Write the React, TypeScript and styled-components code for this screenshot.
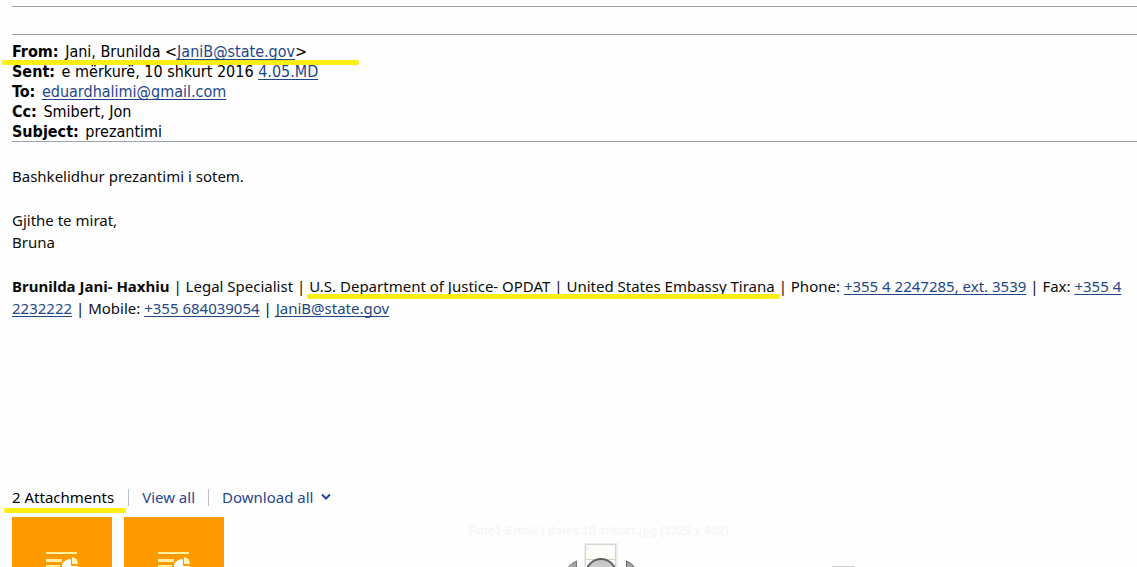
import React from "react";
import styled, { createGlobalStyle } from "styled-components";

const GlobalStyle = createGlobalStyle`
  * { box-sizing: border-box; }
  body {
    margin: 0;
    background: #fefefe;
    color: #0c0c0c;
    font-family: "Noto Sans", "Open Sans", sans-serif;
    font-size: 15px;
    line-height: 22px;
  }
`;

const Page = styled.main`
  position: relative;
  height: 100vh;
  overflow: hidden;
  padding: 6px 0 0 12px;
`;

const Rule = styled.hr<{ $gap?: number }>`
  height: 1px;
  margin: 0 0 ${(p) => p.$gap ?? 0}px;
  border: 0;
  background: #9aa3ad;
`;

const Headers = styled.section`
  height: 106px;
  padding-top: 7px;
  color: #000;
  font-family: "DejaVu Sans Condensed", Tahoma, sans-serif;
  font-size: 16px;
  line-height: 20px;
`;

const Field = styled.div`
  white-space: nowrap;
`;

const Label = styled.b`
  margin-right: 2px;
`;

const Link = styled.a`
  color: #1f4788;
  text-decoration: underline;
  text-decoration-thickness: 1px;
  text-underline-offset: 2px;
  text-decoration-skip-ink: none;
`;

const Marked = styled.span<{ $left: number; $right: number; $bottom: number }>`
  position: relative;
  display: inline-block;
  &::after {
    content: "";
    position: absolute;
    left: -${(p) => p.$left}px;
    right: -${(p) => p.$right}px;
    bottom: ${(p) => p.$bottom}px;
    height: 5px;
    border-radius: 2px;
    background: #faee14;
  }
`;

const Message = styled.section`
  padding-top: 23px;
`;

const Paragraph = styled.p`
  margin: 0 0 22px;
`;

const Attachments = styled.section`
  margin-top: 167px;
`;

const Toolbar = styled.div`
  display: flex;
  align-items: center;
  height: 22px;
`;

const Action = styled.button`
  display: flex;
  align-items: center;
  gap: 8px;
  padding: 0 13px;
  border: 0;
  background: none;
  color: #274690;
  font: inherit;
`;

const Separator = styled.span`
  width: 1px;
  height: 17px;
  background: #b9c0d0;
`;

const Count = styled.span`
  padding-right: 14px;
  color: #000;
`;

const Tiles = styled.div`
  display: flex;
  gap: 12px;
  margin-top: 9px;
`;

const Tile = styled.button`
  flex: none;
  display: flex;
  justify-content: center;
  align-items: flex-start;
  width: 100px;
  height: 100px;
  padding: 34px 0 0;
  border: 0;
  background: #ff9900;
`;

const Viewer = styled.aside`
  position: absolute;
  bottom: 0;
  left: 469px;
  width: 388px;
  height: 44px;
`;

const Caption = styled.div`
  color: #f6f6f6;
  font: bold 12px/16px "Liberation Sans", Arial, sans-serif;
  white-space: nowrap;
`;

const Controls = styled.svg`
  position: absolute;
  left: 0;
  bottom: 0;
`;

const SlidesIcon = () => (
  <svg width="32" height="32" viewBox="0 0 32 32" aria-hidden="true">
    <g fill="#fff0a0">
      <rect x="0" y="1" width="31" height="2" />
      <path d="M0 8h16v3H0zM0 14h14v2H0zM0 20h14v2H0z" />
    </g>
    <path d="M25 8v7h7a8 8 0 1 1-16 0c0-4 4-7 9-7z" fill="#fff" />
    <path d="M26 6a7 7 0 0 1 6 7h-6z" fill="#fff3b0" />
  </svg>
);

export default function App() {
  return (
    <>
      <GlobalStyle />
      <Page>
        <Rule $gap={27} />
        <Rule />
        <Headers>
          <Field>
            <Marked $left={10} $right={52} $bottom={-3}>
              <Label>From:</Label> Jani, Brunilda &lt;
              <Link href="mailto:JaniB@state.gov">JaniB@state.gov</Link>&gt;
            </Marked>
          </Field>
          <Field>
            <Label>Sent:</Label> e mërkurë, 10 shkurt 2016 <Link href="#time">4.05.MD</Link>
          </Field>
          <Field>
            <Label>To:</Label> <Link href="mailto:eduardhalimi@gmail.com">eduardhalimi@gmail.com</Link>
          </Field>
          <Field>
            <Label>Cc:</Label> Smibert, Jon
          </Field>
          <Field>
            <Label>Subject:</Label> prezantimi
          </Field>
        </Headers>
        <Rule />
        <Message>
          <Paragraph>Bashkelidhur prezantimi i sotem.</Paragraph>
          <Paragraph>
            Gjithe te mirat,
            <br />
            Bruna
          </Paragraph>
          <Paragraph>
            <b>Brunilda Jani- Haxhiu</b> | Legal Specialist |{" "}
            <Marked $left={2} $right={5} $bottom={-2}>
              U.S. Department of Justice- OPDAT | United States Embassy Tirana
            </Marked>{" "}
            | Phone: <Link href="tel:+35542247285">+355 4 2247285, ext. 3539</Link> | Fax:{" "}
            <Link href="tel:+35542232222">+355 4 2232222</Link> | Mobile:{" "}
            <Link href="tel:+355684039054">+355 684039054</Link> |{" "}
            <Link href="mailto:JaniB@state.gov">JaniB@state.gov</Link>
          </Paragraph>
        </Message>
        <Attachments>
          <Toolbar>
            <Count>
              <Marked $left={8} $right={12} $bottom={-5}>
                2 Attachments
              </Marked>
            </Count>
            <Separator />
            <Action type="button">View all</Action>
            <Separator />
            <Action type="button">
              Download all
              <svg width="10" height="8" viewBox="0 0 10 8" aria-hidden="true">
                <path d="M1 1.5l4 4 4-4" fill="none" stroke="#274690" strokeWidth="2" />
              </svg>
            </Action>
          </Toolbar>
          <Tiles>
            <Tile type="button" aria-label="First presentation">
              <SlidesIcon />
            </Tile>
            <Tile type="button" aria-label="Second presentation">
              <SlidesIcon />
            </Tile>
          </Tiles>
        </Attachments>
        <Viewer>
          <Caption>Foto1-Email i dates 10 shkurt.jpg (1229 x 602)</Caption>
          <Controls width="388" height="24" viewBox="0 0 388 24" aria-hidden="true">
            <rect x="115" y="0" width="34" height="26" fill="#eeeeee" />
            <rect x="116.500" y="1.500" width="30" height="24" fill="#fdfdfb" stroke="#d4d4d0" />
            <path d="M117 16.500h29" stroke="#d5d8b8" />
            <path d="M118 4v3" stroke="#dfe3cf" />
            <defs>
              <linearGradient id="knob" x1="0" y1="0" x2="0" y2="1">
                <stop offset="0" stopColor="#c0c0c0" />
                <stop offset="1" stopColor="#ededed" />
              </linearGradient>
            </defs>
            <circle cx="132" cy="31" r="15" fill="url(#knob)" stroke="#606060" strokeWidth="2" />
            <path d="M107.500 18v8H98q4-6 9.500-8z" fill="#a5a5a5" stroke="#777" />
            <path d="M157.500 18v8H167q-4-6-9.500-8z" fill="#a5a5a5" stroke="#606060" />
            <path d="M363 23.500h22" stroke="#cfcfcf" />
          </Controls>
        </Viewer>
      </Page>
    </>
  );
}
